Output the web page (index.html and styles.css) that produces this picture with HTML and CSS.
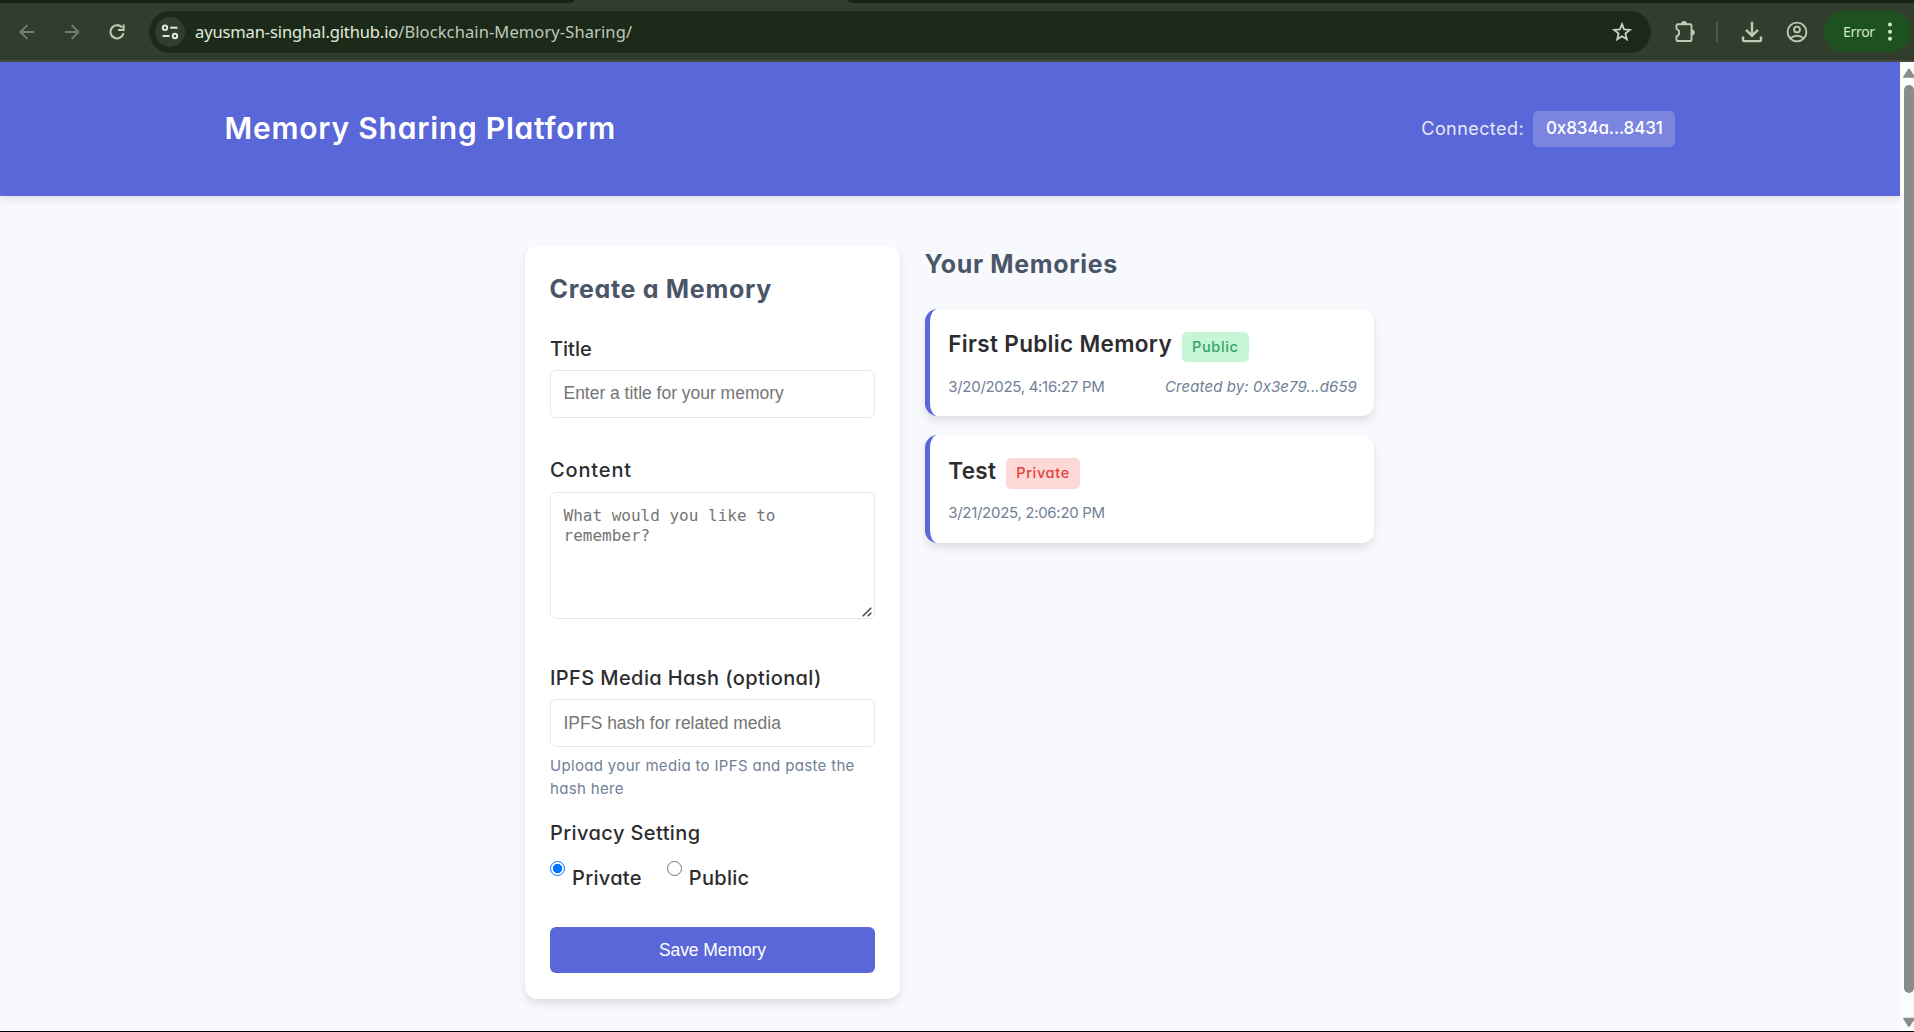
FILE: index.html
```html
<!DOCTYPE html>
<html lang="en">
<head>
<meta charset="utf-8">
<title>Memory Sharing Platform</title>
<link rel="stylesheet" href="styles.css">
</head>
<body>
<div class="browser">
  <div class="tabstrip">
    <div class="tabs-left"></div>
    <div class="tab-active"></div>
    <div class="tabs-right"></div>
  </div>
  <div class="toolbar">
    <div class="nav">
      <svg class="icon dim" width="20" height="20" viewBox="0 0 20 20"><path d="M17 10H4M10.3 3.2 3.5 10l6.800 6.800" /></svg>
      <svg class="icon dim" width="20" height="20" viewBox="0 0 20 20"><path d="M3 10h13M9.700 3.200 16.500 10l-6.800 6.800" /></svg>
      <svg class="icon reload" width="20" height="20" viewBox="0 0 20 20"><path d="M15 5.400A6.600 6.600 0 1 0 16.500 11.200M16.600 2.500V8H11" /></svg>
    </div>
    <div class="omnibox">
      <span class="site"><svg width="20" height="20" viewBox="0 0 20 20"><circle cx="5" cy="5.700" r="2.200"/><path d="M10.300 5.700H17.500"/><path d="M2.500 14h7"/><circle cx="15" cy="14" r="2.200"/></svg></span>
      <span class="url"><span class="host">ayusman-singhal.github.io</span><span class="path">/Blockchain-Memory-Sharing/</span></span>
      <svg class="star" width="22" height="22" viewBox="0 0 22 22"><path d="M11 3.200l2.100 5.300 5.700.4-4.400 3.700 1.400 5.600L11 15.200l-4.800 3 1.400-5.600L3.200 8.900l5.700-.4z"/></svg>
    </div>
    <svg class="icon ext" width="24" height="24" viewBox="0 0 24 24"><path d="M4.500 5.200q0-1 1-1H18.500q1 0 1 1V20q0 1-1 1H5.500q-1 0-1-1V16.400q2.700-.8 2.700-3.800T4.500 8.800z"/><path class="solid" d="M9 4a3 3 0 0 1 6 0zM19.700 9.500a3 3 0 0 1 0 6z"/></svg>
    <span class="divider"></span>
    <svg class="icon down" width="24" height="24" viewBox="0 0 24 24"><path d="M12 1.800V15.500M6 9.800l6 6 6-6M3 16.500V19.800q0 1.300 1.300 1.300H19.700q1.300 0 1.300-1.300V16.500"/></svg>
    <svg class="icon user" width="24" height="24" viewBox="0 0 24 24"><circle cx="12" cy="12" r="9.400"/><circle cx="12" cy="9.500" r="2.900"/><path d="M5.300 18.200q6.700-4.800 13.400 0"/></svg>
    <div class="error"><span>Error</span><svg width="6" height="20" viewBox="0 0 6 20"><circle cx="3" cy="2.500" r="2"/><circle cx="3" cy="9.700" r="2"/><circle cx="3" cy="16.700" r="2"/></svg></div>
  </div>
</div>

<div class="viewport">
  <div class="page">
    <header class="header">
      <h1>Memory Sharing Platform</h1>
      <div class="wallet"><span class="wallet-label">Connected:</span><span class="address">0x834a...8431</span></div>
    </header>
    <main class="main">
      <form class="form">
        <h2 class="form-title">Create a Memory</h2>
        <div class="field">
          <label class="l-title">Title</label>
          <input class="text up" type="text" placeholder="Enter a title for your memory">
        </div>
        <div class="field content">
          <label class="l-content">Content</label>
          <div class="area"><textarea placeholder="What would you like to remember?"></textarea>
          <svg class="grip" width="10" height="10" viewBox="0 0 10 10"><path d="M.7 9.300 9.300.7M5.700 9.300l3.600-3.600"/></svg></div>
        </div>
        <div class="field ipfs">
          <label>IPFS Media Hash (optional)</label>
          <input class="text" type="text" placeholder="IPFS hash for related media">
          <p class="help">Upload your media to IPFS and paste the hash here</p>
        </div>
        <div class="field privacy">
          <label>Privacy Setting</label>
          <div class="radios">
            <input type="radio" name="privacy" checked><label class="opt">Private</label>
            <input type="radio" name="privacy"><label class="opt">Public</label>
          </div>
        </div>
        <button class="save" type="button">Save Memory</button>
      </form>
      <section class="memories">
        <h2 class="list-title">Your Memories</h2>
        <article class="card">
          <div class="card-head"><h3 class="t-long">First Public Memory</h3><span class="badge public">Public</span></div>
          <div class="meta"><span class="date">3/20/2025, 4:16:27 PM</span><span class="by">Created by: 0x3e79...d659</span></div>
        </article>
        <article class="card second">
          <div class="card-head"><h3>Test</h3><span class="badge private">Private</span></div>
          <div class="meta"><span class="date">3/21/2025, 2:06:20 PM</span></div>
        </article>
      </section>
    </main>
  </div>
  <div class="scrollbar">
    <svg width="14" height="11" viewBox="0 0 14 11"><path d="M3.500 9.800Q2.800 9.600 3.300 8.600L8 1.200q1-1.400 2 0L14 7.500V9.800z"/></svg>
    <div class="thumb"></div>
    <svg width="14" height="11" viewBox="0 0 14 11"><path d="M3.500.7q-.7.200-.2 1.200L8 9.300q1 1.400 2 0L14 3V.7z"/></svg>
  </div>
</div>
</body>
</html>
```
FILE: styles.css
```css
* { box-sizing: border-box; }
body {
  margin: 0;
  width: 1914px;
  height: 1032px;
  overflow: hidden;
  display: flex;
  flex-direction: column;
  border-bottom: 1px solid #000;
  background: #f7f9fc;
  color: #2d2d2f;
  font-family: Inter, "Open Sans", sans-serif;
  font-feature-settings: "cv11";
}
h1, h2, h3, p { margin: 0; }

/* browser chrome */
.browser { height: 62px; background: #313e2d; border-bottom: 2px solid #434b42; }
.tabstrip { display: flex; height: 3px; }
.tabs-left { width: 575px; background: #152312; border-bottom-right-radius: 8px 3px; }
.tab-active { width: 272px; }
.tabs-right { flex: 1; background: #152312; border-bottom-left-radius: 8px 3px; }
.toolbar { display: flex; align-items: center; height: 57px; }
.nav { display: flex; gap: 25px; width: 149px; padding-left: 17px; }
.icon { fill: none; stroke: #b9ccb4; stroke-width: 1.9; flex: none; }
.dim { stroke: #75816f; }
.reload { margin-left: -.5px; stroke-width: 2.1; }
.solid { fill: #b9ccb4; stroke: none; }
.omnibox {
  display: flex; align-items: center;
  width: 1502px; height: 42px; padding: 0 18px 0 6px;
  border-radius: 21px; background: #1c2a19; margin-top: 1px;
}
.site { display: flex; align-items: center; justify-content: center; width: 30px; height: 30px; border-radius: 50%; background: #313e2d; }
.site svg { fill: none; stroke: #dfe8da; stroke-width: 2; }
.url { flex: 1; padding-left: 10px; font: 16.5px/24px "Noto Sans", sans-serif; }
.host { color: #e2ebdd; letter-spacing: -.12px; }
.path { color: #bfc8bb; letter-spacing: .1px; }
.star { fill: none; stroke: #ccd3c9; stroke-width: 1.8; }
.ext { margin-left: 21px; }
.divider { width: 2px; height: 20px; margin-left: 20px; background: #4b5c46; }
.down { margin-left: 22px; stroke-width: 2.4; }
.user { margin-left: 21px; }
.error {
  display: flex; align-items: center; gap: 12px;
  width: 87px; height: 41px; margin-left: 15px; padding-left: 19px;
  border-radius: 21px; background: #1e5120; color: #d3e8cd;
  font: 14px/20px "Noto Sans", sans-serif; letter-spacing: -.3px;
}
.error svg { fill: #d3e8cd; }

/* page */
.viewport { flex: 1; display: flex; min-height: 0; }
.page { width: 1900px; }
.header {
  display: flex; justify-content: space-between; align-items: center;
  height: 134px; padding: 0 225px;
  background: #5a67d8; color: #fff;
  box-shadow: 0 3px 8px rgba(0, 0, 0, .1);
}
h1 { font-size: 30px; font-weight: 600; letter-spacing: .78px; margin: -2px 0 0 -.5px; line-height: 44px; }
.wallet { display: flex; align-items: center; gap: 9px; font-size: 18px; }
.wallet-label { letter-spacing: .43px; color: #e6e8fa; margin-top: -1px; }
.address {
  width: 142px; height: 36px; padding-left: 13px; line-height: 35px;
  font-size: 17px; font-weight: 500; letter-spacing: -.1px;
  border-radius: 5px; background: rgba(255, 255, 255, .2);
}
.main { display: flex; gap: 25px; align-items: flex-start; width: 850px; margin: 50px auto 0; }
.form {
  width: 375px; height: 753px; padding: 25px;
  background: #fff; border-radius: 12.5px;
  box-shadow: 0 5px 8px rgba(0, 0, 0, .1);
}
h2 { font-size: 25px; line-height: 36px; font-weight: 700; color: #4a5568; }
.form-title { letter-spacing: .69px; margin-left: -.5px; }
.field { display: flex; flex-direction: column; margin-top: 28px; }
label { font-size: 20px; line-height: 28px; font-weight: 500; letter-spacing: .4px; }
.l-title { letter-spacing: 0; }
.l-content { letter-spacing: .85px; }
.text, textarea {
  width: 325px; margin: 7px 0 0; padding: 0 12.5px;
  border: 1px solid #e2e8f0; border-radius: 6px; background: #fff; outline: none;
}
.text { height: 48px; font: 17.5px "Liberation Sans", sans-serif; letter-spacing: -.02px; }
.up { padding-bottom: 2px; }
::placeholder { color: #757575; opacity: 1; }
.content { margin-top: 38px; }
.area { position: relative; height: 135px; padding-top: 1px; }
textarea { display: block; height: 127px; padding: 12.5px; resize: none; font: 16px/20px "DejaVu Sans Mono", monospace; overflow: hidden; }
.grip { position: absolute; right: 3px; bottom: 2px; fill: none; stroke: #444; stroke-width: 1.5; }
.ipfs { margin-top: 45px; }
.help { margin-top: 7px; font-size: 15px; line-height: 23px; letter-spacing: .33px; color: #718096; }
.privacy { margin-top: 19px; }
.radios { display: flex; align-items: flex-start; height: 31px; margin-top: 14px; }
.radios input { appearance: none; width: 15px; height: 15px; margin: 0; border: 1.5px solid #767676; border-radius: 50%; }
.radios input:checked { border-color: #0075ff; background: radial-gradient(circle, #0075ff 4.4px, #fff 5px); }
.opt { margin: 3px 25px 0 7px; letter-spacing: .3px; }
.save {
  display: block; width: 325px; height: 46px; margin-top: 35px; padding: 0;
  border: 0; border-radius: 6px; background: #5a67d8; color: #fff;
  font: 17.5px "Liberation Sans", sans-serif; letter-spacing: -.08px;
}
.memories { width: 450px; }
.list-title { letter-spacing: .65px; margin: 0 0 27px -.5px; }
.card {
  width: 449px; height: 107px; padding: 18px 17px 0 18.3px;
  border-left: 5px solid #5a67d8; border-radius: 12.5px; background: #fff;
  box-shadow: 0 5px 8px rgba(0, 0, 0, .1);
}
.card-head { display: flex; align-items: flex-start; gap: 10px; height: 48px; }
h3 { font-size: 22.5px; line-height: 34px; font-weight: 600; letter-spacing: .3px; }
.t-long { letter-spacing: .33px; }
.badge { height: 30px; margin-top: 5px; padding: 0 10px; border-radius: 5px; font-size: 14.5px; line-height: 30px; font-weight: 500; letter-spacing: .65px; }
.public { background: #c6f6d5; color: #38a169; }
.private { background: #fed7d7; color: #e53e3e; }
.meta { display: flex; justify-content: space-between; font-size: 15px; line-height: 23px; color: #718096; }
.date { letter-spacing: -.3px; }
.by { font-style: italic; letter-spacing: .1px; }
.second { height: 108px; margin-top: 19px; padding-top: 19px; }
.second .card-head { height: 47px; }
.second .badge { height: 31px; margin-top: 4px; }

/* scrollbar, cut by the window's right edge */
.scrollbar { display: flex; flex-direction: column; width: 14px; padding: 6px 0 3px; background: #fcfcfc; }
.scrollbar svg { fill: #8b8b8b; flex: none; }
.thumb { flex: 1; margin: 6px 0 24px 4px; background: #8b8b8b; border-radius: 5px; }
```
